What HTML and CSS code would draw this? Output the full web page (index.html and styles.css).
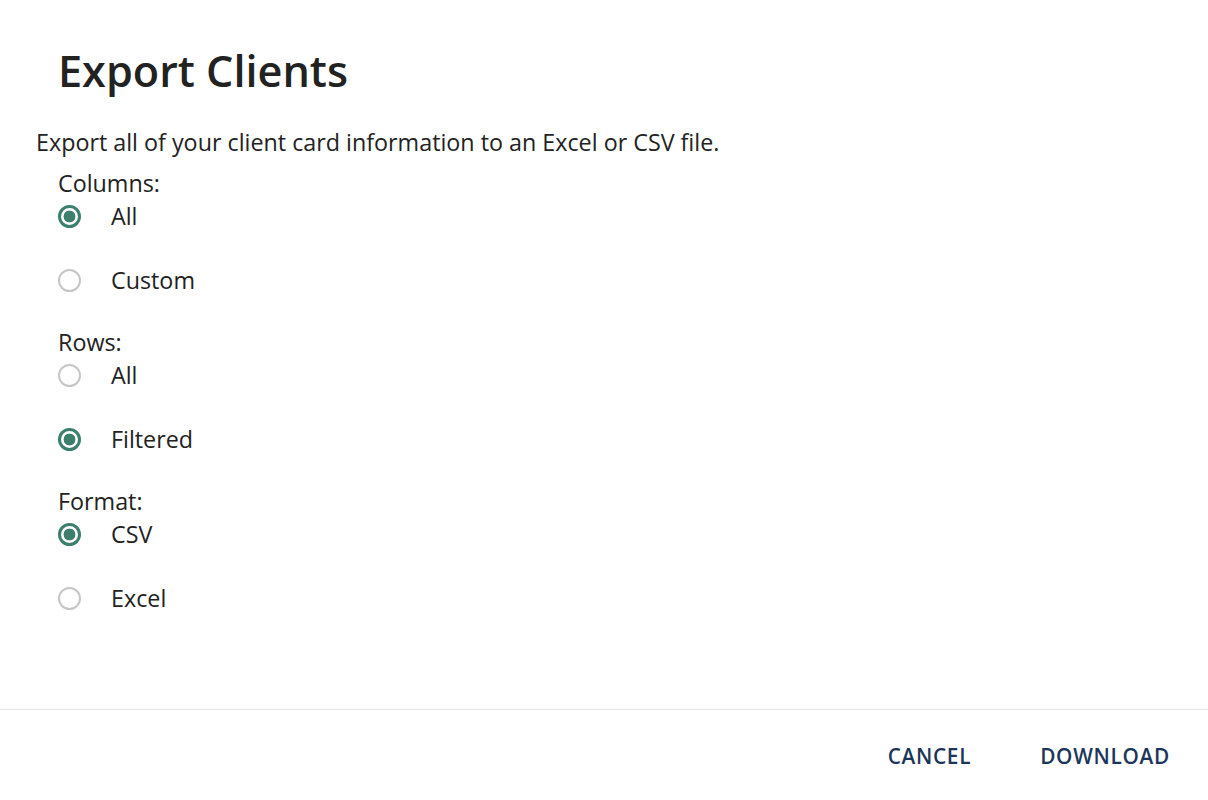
FILE: index.html
```html
<!DOCTYPE html>
<html>
<head>
  <title>Export Clients</title>
  <link rel="stylesheet" href="styles.css">
</head>
<body>
  <div id="dialog">
    <div class="dialog-body">
      <h1 class="dialog-title">Export Clients</h1>
      <p class="dialog-text">Export all of your client card information to an Excel or CSV file.</p>

      <form id="exportForm">
        <div class="group">
          <div class="group-label">Columns:</div>
          <label class="option">
            <input type="radio" name="columns" value="all" checked>
            <span>All</span>
          </label>
          <label class="option">
            <input type="radio" name="columns" value="custom">
            <span>Custom</span>
          </label>
        </div>

        <div class="group">
          <div class="group-label">Rows:</div>
          <label class="option">
            <input type="radio" name="rows" value="all">
            <span>All</span>
          </label>
          <label class="option">
            <input type="radio" name="rows" value="filtered" checked>
            <span>Filtered</span>
          </label>
        </div>

        <div class="group">
          <div class="group-label">Format:</div>
          <label class="option">
            <input type="radio" name="format" value="csv" checked>
            <span>CSV</span>
          </label>
          <label class="option">
            <input type="radio" name="format" value="excel">
            <span>Excel</span>
          </label>
        </div>
      </form>
    </div>

    <div class="dialog-actions">
      <button type="button" class="text-button">Cancel</button>
      <button type="submit" form="exportForm" class="text-button">Download</button>
    </div>
  </div>
</body>
</html>
```

FILE: styles.css
```css
html, body {
  margin: 0;
  height: 100%;
}

body {
  font-family: "Open Sans", "Noto Sans", Arial, sans-serif;
  color: #222;
  background: #fff;
}

#dialog {
  display: flex;
  flex-direction: column;
  height: 100vh;
}

.dialog-body {
  flex: 1;
}

.dialog-title {
  margin: 0;
  padding: 42px 0 0 58px;
  font-size: 43.2px;
  line-height: 58px;
  font-weight: 600;
  color: #222;
}

.dialog-text {
  margin: 28px 0 0 36px;
  font-size: 23.3px;
  line-height: 28px;
}

#exportForm {
  padding-left: 58px;
  margin-top: 13px;
}

.group {
  display: flex;
  flex-direction: column;
  margin-bottom: 29px;
}

.group-label {
  font-size: 23.3px;
  line-height: 28px;
}

.option {
  display: flex;
  align-items: center;
  height: 38px;
  font-size: 23.3px;
  cursor: pointer;
}

.option + .option {
  margin-top: 26px;
}

.option input[type="radio"] {
  appearance: none;
  -webkit-appearance: none;
  box-sizing: border-box;
  width: 23px;
  height: 23px;
  margin: 0 30px 0 0;
  border: 2.5px solid #c6c6c6;
  border-radius: 50%;
  background: #fff;
}

.option input[type="radio"]:checked {
  border: 3px solid #3b7f6c;
  background: radial-gradient(circle, #3b7f6c 0 5.6px, #fff 6.2px);
}

.dialog-actions {
  display: flex;
  justify-content: flex-end;
  align-items: center;
  gap: 37px;
  height: 91px;
  padding: 2px 22px 0 0;
  box-sizing: border-box;
  border-top: 1px solid #e4e4e4;
}

.text-button {
  padding: 8px 16px;
  border: none;
  background: none;
  font-family: inherit;
  font-size: 20.8px;
  font-weight: 600;
  letter-spacing: 0.7px;
  text-transform: uppercase;
  color: #1c365a;
  cursor: pointer;
}
```
